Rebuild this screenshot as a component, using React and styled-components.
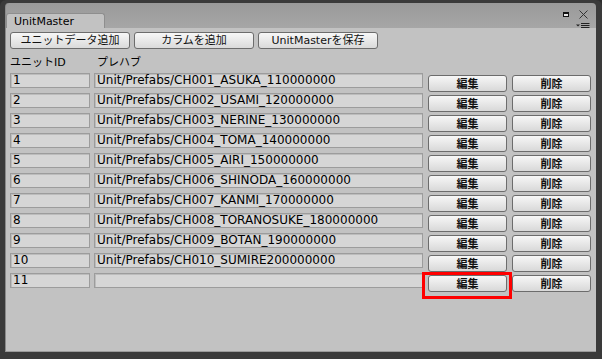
import styled, { createGlobalStyle } from "styled-components";

const GlobalStyle = createGlobalStyle`
  html, body {
    margin: 0;
    padding: 0;
    background: #2e2e2e;
  }
  body {
    font-family: "DejaVu Sans", "Noto Sans CJK JP", sans-serif;
    font-size: 11px;
    color: #000;
  }
`;

const rows = [
  { id: "1", prefab: "Unit/Prefabs/CH001_ASUKA_110000000" },
  { id: "2", prefab: "Unit/Prefabs/CH002_USAMI_120000000" },
  { id: "3", prefab: "Unit/Prefabs/CH003_NERINE_130000000" },
  { id: "4", prefab: "Unit/Prefabs/CH004_TOMA_140000000" },
  { id: "5", prefab: "Unit/Prefabs/CH005_AIRI_150000000" },
  { id: "6", prefab: "Unit/Prefabs/CH006_SHINODA_160000000" },
  { id: "7", prefab: "Unit/Prefabs/CH007_KANMI_170000000" },
  { id: "8", prefab: "Unit/Prefabs/CH008_TORANOSUKE_180000000" },
  { id: "9", prefab: "Unit/Prefabs/CH009_BOTAN_190000000" },
  { id: "10", prefab: "Unit/Prefabs/CH010_SUMIRE200000000" },
  { id: "11", prefab: "", highlight: true },
];

function App() {
  return (
    <>
      <GlobalStyle />
      <Frame>
        <TitleBar>
          <Tab>UnitMaster</Tab>
          <WindowIcons>
            <IconRow>
              <svg width="6" height="5" viewBox="0 0 6 5">
                <rect x="0.5" y="0.5" width="5" height="4" fill="#e8e8e8" stroke="#111" />
                <rect x="0.5" y="0.5" width="5" height="1.5" fill="#111" />
              </svg>
              <svg width="9" height="9" viewBox="0 0 9 9">
                <path d="M0.5 0.5 L8.5 8.5 M8.5 0.5 L0.5 8.5" stroke="#333" strokeWidth="1" />
              </svg>
            </IconRow>
            <IconRow>
              <svg width="14" height="6" viewBox="0 0 14 6">
                <path d="M0 1.5 L4 1.5 L2 3.5 Z" fill="#222" />
                <path d="M5 0.5 H13.5 M5 2.5 H13.5 M5 4.5 H13.5" stroke="#222" strokeWidth="1" />
              </svg>
            </IconRow>
          </WindowIcons>
        </TitleBar>
        <Content>
          <Toolbar>
            <ToolButton>ユニットデータ追加</ToolButton>
            <ToolButton>カラムを追加</ToolButton>
            <ToolButton>UnitMasterを保存</ToolButton>
          </Toolbar>
          <HeaderRow>
            <HeaderCell $width={84}>ユニットID</HeaderCell>
            <HeaderCell>プレハブ</HeaderCell>
          </HeaderRow>
          <RowList>
            {rows.map((row) => (
              <Row key={row.id}>
                <Field $width={80}>{row.id}</Field>
                <Field $width={329}>{row.prefab}</Field>
                <ButtonSlot>
                  {row.highlight && <Highlight />}
                  <RowButton>編集</RowButton>
                </ButtonSlot>
                <RowButton>削除</RowButton>
              </Row>
            ))}
          </RowList>
        </Content>
      </Frame>
    </>
  );
}

const Frame = styled.div`
  width: 602px;
  height: 359px;
  box-sizing: border-box;
  display: flex;
  flex-direction: column;
  background: #3a3a3a;
  border-radius: 6px 6px 0 0;
  padding: 3px 6px 7px 5px;
`;

const TitleBar = styled.div`
  height: 25px;
  flex-shrink: 0;
  display: flex;
  align-items: flex-end;
  justify-content: space-between;
  background: linear-gradient(#9a9a9a, #a6a6a6);
  border-left: 1px solid #8a8a8a;
  border-radius: 4px 4px 0 0;
`;

const Tab = styled.div`
  height: 15px;
  width: 99px;
  box-sizing: border-box;
  background: #c2c2c2;
  border: 1px solid #8e8e8e;
  border-bottom: none;
  border-radius: 3px 3px 0 0;
  font-size: 11px;
  line-height: 15px;
  padding-left: 7px;
`;

const WindowIcons = styled.div`
  align-self: stretch;
  display: flex;
  flex-direction: column;
  align-items: flex-end;
  gap: 4px;
  padding: 7px 6px 0 0;
`;

const IconRow = styled.div`
  display: flex;
  align-items: center;
  gap: 10px;

  &:first-child {
    margin-right: 2px;
  }
`;

const Content = styled.div`
  flex: 1;
  background: #c2c2c2;
  border-left: 1px solid #8a8a8a;
  border-bottom: 1px solid #9a9a9a;
  padding: 4px 0 0 4px;
`;

const Toolbar = styled.div`
  display: flex;
  gap: 4px;
`;

const ToolButton = styled.button`
  width: 120px;
  height: 17px;
  padding: 0;
  box-sizing: border-box;
  font-family: "DejaVu Sans", "Noto Sans CJK JP", sans-serif;
  font-size: 11px;
  color: #111;
  border: 1px solid #6c6c6c;
  border-radius: 3px;
  background: linear-gradient(#f7f7f7, #dadada);
  line-height: 15px;
`;

const HeaderRow = styled.div`
  display: flex;
  height: 24px;
  align-items: center;
  font-size: 11px;
`;

const HeaderCell = styled.div`
  width: ${(p) => (p.$width ? `${p.$width}px` : "auto")};
  padding-left: ${(p) => (p.$width ? "0" : "3px")};
`;

const RowList = styled.div`
  display: flex;
  flex-direction: column;
  gap: 5px;
`;

const Row = styled.div`
  display: flex;
  align-items: flex-start;
  height: 15px;
  gap: 4px;
`;

const Field = styled.div`
  width: ${(p) => p.$width}px;
  height: 15px;
  box-sizing: border-box;
  background: #d6d6d6;
  border: 1px solid #9c9c9c;
  box-shadow: inset 1px 1px 0 #bcbcbc;
  padding-left: 2px;
  line-height: 13px;
  font-size: 12px;
  white-space: nowrap;
`;

const ButtonSlot = styled.div`
  position: relative;
  margin-left: 1px;
  margin-right: 1px;
  display: flex;
`;

const RowButton = styled.button`
  width: 79px;
  height: 17px;
  margin-top: 2px;
  padding: 0;
  box-sizing: border-box;
  font-family: "Noto Sans CJK JP", "DejaVu Sans", sans-serif;
  font-size: 11px;
  font-weight: bold;
  color: #111;
  border: 1px solid #6c6c6c;
  border-radius: 3px;
  background: linear-gradient(#f7f7f7, #d8d8d8);
  line-height: 15px;
`;

const Highlight = styled.div`
  position: absolute;
  left: -6px;
  right: -5px;
  top: -1px;
  bottom: -7px;
  border: 3px solid #ff0000;
  pointer-events: none;
`;

export default App;
